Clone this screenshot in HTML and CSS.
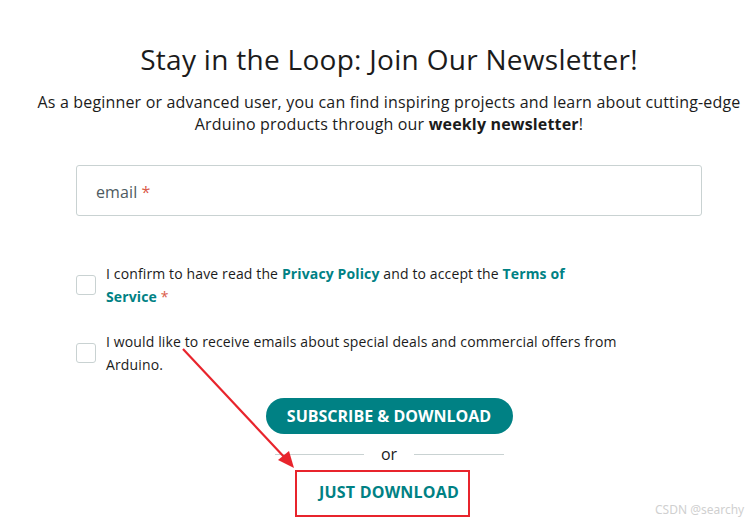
FILE: index.html
```html
<!DOCTYPE html>
<html lang="en">
<head>
<meta charset="utf-8">
<title>Newsletter</title>
<link rel="stylesheet" href="styles.css">
</head>
<body>
<main class="page">
  <section class="newsletter">
    <h1 class="title">Stay in the Loop: Join Our Newsletter!</h1>
    <p class="lead">As a beginner or advanced user, you can find inspiring projects and learn about cutting-edge Arduino products through our <strong>weekly newsletter</strong>!</p>
    <form class="form">
      <div class="field"><span class="placeholder">email <span class="req">*</span></span></div>
      <div class="checks">
        <label class="check">
          <span class="box"></span>
          <span class="check-text">I confirm to have read the <a class="link">Privacy Policy</a> and to accept the <a class="link">Terms of<br>Service</a> <span class="req">*</span></span>
        </label>
        <label class="check">
          <span class="box"></span>
          <span class="check-text">I would like to receive emails about special deals and commercial offers from Arduino.</span>
        </label>
      </div>
      <div class="actions">
        <button type="button" class="btn-primary">SUBSCRIBE &amp; DOWNLOAD</button>
        <div class="divider"><span class="rule"></span><span class="or">or</span><span class="rule"></span></div>
        <button type="button" class="btn-text">JUST DOWNLOAD</button>
      </div>
    </form>
  </section>
  <div class="annot-box"></div>
  <svg class="annot-arrow" width="756" height="523" viewBox="0 0 756 523">
    <line x1="183" y1="349" x2="286" y2="459" stroke="#e8242c" stroke-width="2.2"/>
    <polygon points="294,468 278,460 289,451" fill="#e8242c"/>
  </svg>
  <div class="watermark">CSDN @searchy</div>
</main>
</body>
</html>
```
FILE: styles.css
```css
* { box-sizing: border-box; }
html, body { margin: 0; padding: 0; background: #fff; }
body {
  font-family: "Open Sans", "Noto Sans", sans-serif;
  color: #1b1b1b;
  width: 756px;
  height: 523px;
  overflow: hidden;
}
.page { position: relative; width: 756px; height: 523px; }
.newsletter {
  width: 720px;
  margin-left: 29px;
  padding-top: 42px;
  text-align: center;
}
.title {
  margin: 0;
  font-size: 28px;
  line-height: 34px;
  font-weight: 400;
  letter-spacing: 0.29px;
}
.lead {
  margin: 15px 0 0;
  font-size: 16px;
  line-height: 22px;
  letter-spacing: 0.17px;
}
.lead strong { font-weight: 700; }
.form {
  margin: 30px 47px 0;
  text-align: left;
}
.field {
  height: 51px;
  border: 1px solid #c9d2d2;
  border-radius: 3px;
  display: flex;
  align-items: center;
  padding-left: 19px;
  padding-top: 3px;
}
.placeholder { font-size: 16px; color: #4e5b61; letter-spacing: 0.1px; }
.req { color: #da5b4a; }
.checks {
  margin-top: 46px;
  display: flex;
  flex-direction: column;
  gap: 22px;
}
.check {
  display: flex;
  align-items: center;
  gap: 10px;
}
.box {
  flex: none;
  width: 20px;
  height: 20px;
  border: 1px solid #c9d2d2;
  border-radius: 3px;
  background: #fff;
}
.check-text {
  width: 540px;
  font-size: 14px;
  line-height: 23px;
  letter-spacing: 0.13px;
  color: #1b1b1b;
}
.link { color: #008184; font-weight: 700; }
.actions {
  margin-top: 22px;
  display: flex;
  flex-direction: column;
  align-items: center;
}
.btn-primary {
  width: 247px;
  height: 36px;
  border: 0;
  border-radius: 18px;
  background: #008184;
  color: #fff;
  font-family: "Open Sans", "Noto Sans", sans-serif;
  font-weight: 700;
  font-size: 16px;
  letter-spacing: 0;
  padding: 0;
}
.divider {
  margin-top: 9px;
  width: 229px;
  height: 22px;
  display: flex;
  align-items: center;
  gap: 17px;
}
.rule { flex: 1; height: 1px; background: #c9d2d2; }
.or { font-size: 16px; line-height: 22px; color: #1b1b1b; }
.btn-text {
  margin-top: 16px;
  border: 0;
  background: transparent;
  color: #008184;
  font-family: "Open Sans", "Noto Sans", sans-serif;
  font-weight: 700;
  font-size: 16px;
  letter-spacing: 0.2px;
  padding: 0;
  line-height: 22px;
}
.annot-box {
  position: absolute;
  left: 295px;
  top: 470px;
  width: 175px;
  height: 47px;
  border: 2px solid #e8242c;
}
.annot-arrow { position: absolute; left: 0; top: 0; pointer-events: none; }
.watermark {
  position: absolute;
  left: 655px;
  top: 501px;
  font-family: "Noto Sans", "Noto Sans CJK SC", sans-serif;
  font-size: 12px;
  color: #d0d0d0;
  white-space: nowrap;
}
```
